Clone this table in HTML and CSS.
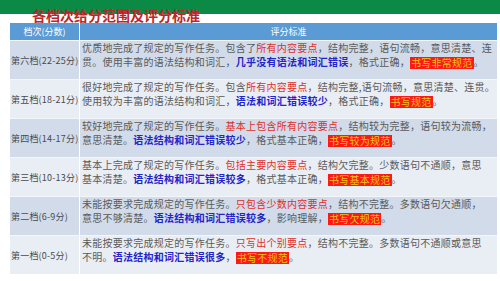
FILE: index.html
```html
<!DOCTYPE html>
<html lang="zh">
<head>
<meta charset="utf-8">
<link rel="stylesheet" href="styles.css">
</head>
<body>
<header class="topbar">
  <h1 class="title">各档次给分范围及评分标准</h1>
</header>
<div class="table">
  <div class="th">档次(分数)</div>
  <div class="th">评分标准</div>

  <div class="c1 odd">第六档(22-25分)</div>
  <div class="c2 odd">
    <div class="ln">优质地完成了规定的写作任务。包含了<span class="r">所有内容要点</span>，结构完整，语句流畅，意思清楚、连</div>
    <div class="ln">贯。使用丰富的语法结构和词汇，<span class="b">几乎没有语法和词汇错误</span>，格式正确，<span class="hl">书写非常规范</span>。</div>
  </div>

  <div class="c1 even">第五档(18-21分)</div>
  <div class="c2 even">
    <div class="ln">很好地完成了规定的写作任务。包含<span class="r">所有内容要点</span>，结构完整,语句流畅，意思清楚、连贯。</div>
    <div class="ln">使用较为丰富的语法结构和词汇，<span class="b">语法和词汇错误较少</span>，格式正确，<span class="hl">书写规范</span>。</div>
  </div>

  <div class="c1 odd">第四档(14-17分)</div>
  <div class="c2 odd">
    <div class="ln">较好地完成了规定的写作任务。<span class="r">基本上包含所有内容要点</span>，结构较为完整，语句较为流畅，</div>
    <div class="ln">意思清楚。<span class="b">语法结构和词汇错误较少</span>，格式基本正确，<span class="hl">书写较为规范</span>。</div>
  </div>

  <div class="c1 even">第三档(10-13分)</div>
  <div class="c2 even">
    <div class="ln">基本上完成了规定的写作任务。<span class="r">包括主要内容要点</span>，结构欠完整。少数语句不通顺，意思</div>
    <div class="ln">基本清楚。<span class="b">语法结构和词汇错误较多</span>，格式基本正确，<span class="hl">书写基本规范</span>。</div>
  </div>

  <div class="c1 odd">第二档(6-9分)</div>
  <div class="c2 odd">
    <div class="ln">未能按要求完成规定的写作任务。<span class="r">只包含少数内容要点</span>，结构不完整。多数语句欠通顺，</div>
    <div class="ln">意思不够清楚。<span class="b">语法结构和词汇错误较多</span>，影响理解，<span class="hl">书写欠规范</span>。</div>
  </div>

  <div class="c1 even">第一档(0-5分)</div>
  <div class="c2 even">
    <div class="ln">未能按要求完成规定的写作任务。<span class="r">只写出个别要点</span>，结构不完整。多数语句不通顺或意思</div>
    <div class="ln">不明。<span class="b">语法结构和词汇错误很多</span>，<span class="hl">书写不规范</span>。</div>
  </div>
</div>
</body>
</html>
```
FILE: styles.css
```css
* { box-sizing: border-box; }
html, body {
  margin: 0;
  padding: 0;
  background: #ffffff;
  width: 500px;
  height: 281px;
  overflow: hidden;
  font-family: "Noto Sans CJK SC", "Noto Sans", sans-serif;
}
.topbar {
  height: 23px;
  background: linear-gradient(#0b8a45 0, #0b8a45 14px, #ffffff 14px);
  padding-left: 32px;
  padding-top: 7px;
}
.title {
  margin: 0;
  font-size: 14px;
  line-height: 16px;
  font-weight: 700;
  color: #bc262b;
  letter-spacing: 0px;
  white-space: nowrap;
}
.table {
  margin: 0 3px 0 10px;
  display: grid;
  grid-template-columns: 69px 1fr;
  grid-auto-rows: 39px;
  grid-template-rows: 17px;
  column-gap: 1px;
  row-gap: 0;
  background: #ffffff;
}
.th {
  background: #5b9bd5;
  color: #ffffff;
  font-size: 9px;
  display: flex;
  align-items: center;
  justify-content: center;
}
.odd { background: #d1dbe9; }
.even { background: #e9edf4; }
.c1 {
  font-size: 9px;
  letter-spacing: 0.2px;
  color: #4a4a4a;
  display: flex;
  align-items: center;
  padding-left: 1px;
  white-space: nowrap;
  border-top: 1px solid #f4f6fa;
}
.c2 {
  padding: 0 0 0 2px;
  font-size: 10px;
  line-height: 14px;
  color: #5a5a5a;
  letter-spacing: 0.25px;
  border-top: 1px solid #f4f6fa;
}
.ln { white-space: nowrap; height: 14px; }
.r { color: #de2f2a; }
.b { color: #2424c8; font-weight: 700; }
.hl {
  display: inline-block;
  background: #fb1b14;
  color: #f3c31c;
  line-height: 12px;
  padding: 0 1px;
  vertical-align: middle;
}
```
